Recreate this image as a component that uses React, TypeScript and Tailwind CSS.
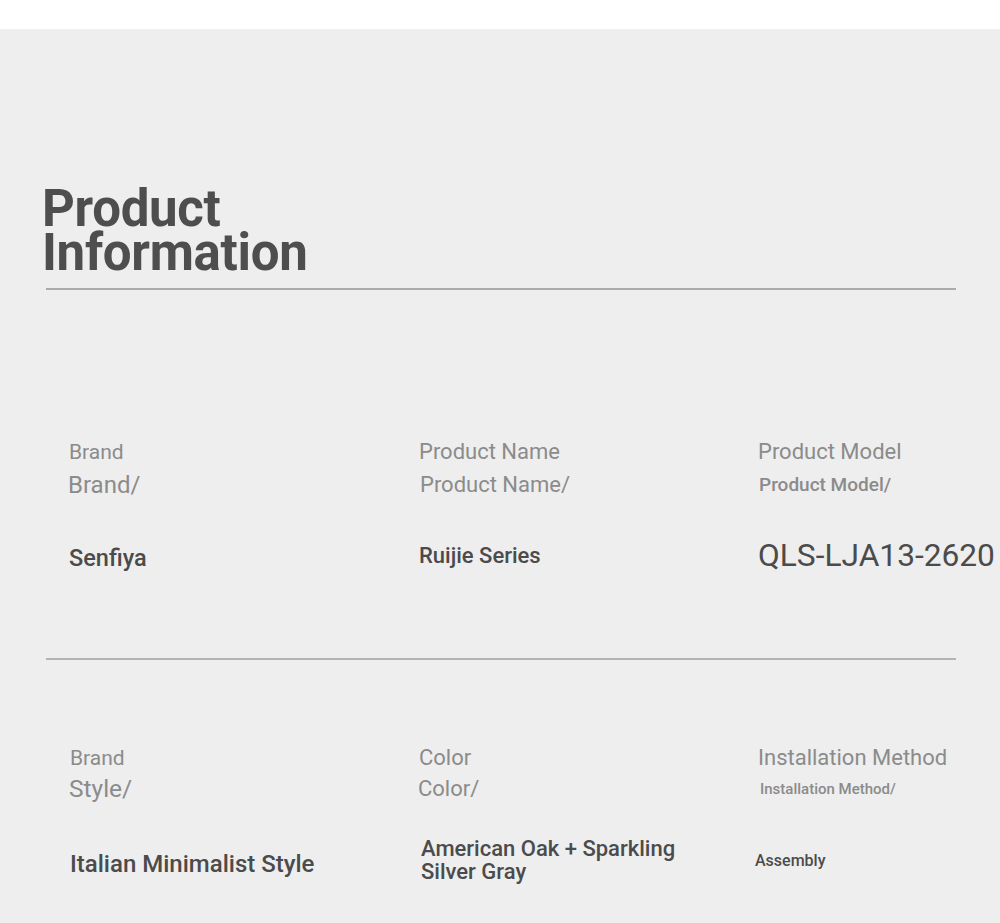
type Cell = {
  label: string
  labelClass: string
  sub: string
  subClass: string
  value: string[]
  valueClass: string
}

const rowOne: Cell[] = [
  {
    label: 'Brand',
    labelClass: 'text-[21px]',
    sub: 'Brand/',
    subClass: 'text-[24px] -ml-px',
    value: ['Senfiya'],
    valueClass: 'text-[23.5px] font-medium leading-[28px] mt-[45px]',
  },
  {
    label: 'Product Name',
    labelClass: 'text-[22px]',
    sub: 'Product Name/',
    subClass: 'text-[22px] ml-px',
    value: ['Ruijie Series'],
    valueClass: 'text-[22px] font-medium leading-[28px] mt-[43px]',
  },
  {
    label: 'Product Model',
    labelClass: 'text-[22px]',
    sub: 'Product Model/',
    subClass: 'text-[19px] font-medium ml-px',
    value: ['QLS-LJA13-2620'],
    valueClass: 'text-[31.7px] leading-[28px] mt-[43px]',
  },
]

const rowTwo: Cell[] = [
  {
    label: 'Brand',
    labelClass: 'text-[21px] ml-px',
    sub: 'Style/',
    subClass: 'text-[24.5px]',
    value: ['Italian Minimalist Style'],
    valueClass: 'text-[24px] font-medium mt-[47px] ml-px leading-[28px]',
  },
  {
    label: 'Color',
    labelClass: 'text-[22px]',
    sub: 'Color/',
    subClass: 'text-[22px] -ml-px',
    value: ['American Oak + Sparkling', 'Silver Gray'],
    valueClass: 'text-[22px] font-medium mt-[34px] ml-[2px] leading-[23px]',
  },
  {
    label: 'Installation Method',
    labelClass: 'text-[22px]',
    sub: 'Installation Method/',
    subClass: 'text-[15px] font-medium ml-[2px]',
    value: ['Assembly'],
    valueClass: 'text-[16px] font-medium mt-[44px] -ml-[3px] leading-[28px]',
  },
]

function InfoCell({ cell, gap }: { cell: Cell; gap: string }) {
  return (
    <div className="flex flex-col whitespace-nowrap">
      <div className={`leading-[28px] text-[#8b8b8b] ${cell.labelClass}`}>
        {cell.label}
      </div>
      <div className={`leading-[28px] text-[#8b8b8b] ${gap} ${cell.subClass}`}>
        {cell.sub}
      </div>
      <div className={`text-[#4b4b4b] ${cell.valueClass}`}>
        {cell.value.map((line) => (
          <div key={line}>{line}</div>
        ))}
      </div>
    </div>
  )
}

function InfoRow({ cells, gap }: { cells: Cell[]; gap: string }) {
  return (
    <div className="grid grid-cols-[350px_339px_1fr] pl-[23px]">
      {cells.map((c) => (
        <InfoCell key={c.sub} cell={c} gap={gap} />
      ))}
    </div>
  )
}

export default function App() {
  return (
    <div
      className="min-h-[923px] w-full bg-[#eeeeee]"
      style={{ fontFamily: 'Roboto, "Liberation Sans", sans-serif' }}
    >
      <div className="h-[29px] bg-white" />

      <div className="px-[46px] pb-[40px]">
        <h1 className="ml-[-4px] mt-[158px] text-[51px] font-bold leading-[44px] tracking-[-0.3px] text-[#4e4e4e]">
          Product
          <br />
          Information
        </h1>

        <div className="mt-[13px] h-[2px] w-[910px] bg-[#ababab]" />

        <div className="pt-[148px]">
          <InfoRow cells={rowOne} gap="mt-[5px]" />
        </div>

        <div className="mt-[86px] h-[2px] w-[910px] bg-[#b3b3b3]" />

        <div className="pt-[84px]">
          <InfoRow cells={rowTwo} gap="mt-[3px]" />
        </div>
      </div>
    </div>
  )
}
